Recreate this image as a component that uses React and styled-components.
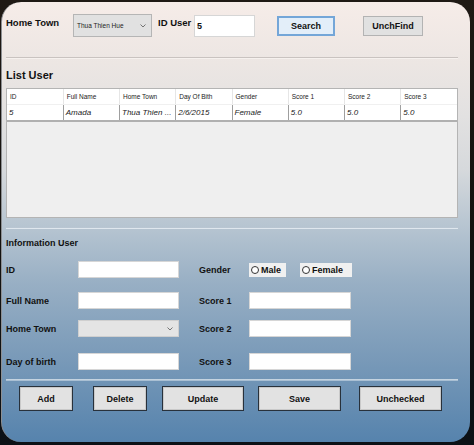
import styled, { createGlobalStyle } from "styled-components";

const GlobalStyle = createGlobalStyle`
  html, body {
    margin: 0;
    padding: 0;
  }
  body {
    width: 474px;
    height: 445px;
    overflow: hidden;
    background: linear-gradient(180deg, #1f1914 0%, #14120f 50%, #0c1116 100%);
    font-family: "Liberation Sans", Arial, sans-serif;
  }
`;

const Window = styled.div`
  box-sizing: border-box;
  width: 469px;
  height: 440px;
  margin: 2px 0 0 1px;
  padding: 12px 12px 0 4px;
  border-radius: 20px;
  border-left: 1px solid #8d8f92;
  background: linear-gradient(
    180deg,
    #f6ece8 0%,
    #ece6e3 14%,
    #e2e1e1 26%,
    #d6d9dc 38%,
    #b4c3d0 52%,
    #98afc4 64%,
    #7b9bb9 80%,
    #5683ad 100%
  );
  overflow: hidden;
`;

const TopBar = styled.div`
  display: flex;
  align-items: center;
  height: 23px;
`;

const BarLabel = styled.span`
  width: ${(p) => p.$w}px;
  margin-left: ${(p) => p.$ml || 0}px;
  font-size: 9.5px;
  font-weight: bold;
  color: #111;
  align-self: flex-start;
  padding-top: 3px;
`;

const Combo = styled.div`
  box-sizing: border-box;
  position: relative;
  width: ${(p) => p.$w}px;
  height: ${(p) => p.$h}px;
  background: ${(p) => (p.$disabled ? "#e4e4e4" : "#e1e1e1")};
  border: 1px solid ${(p) => (p.$disabled ? "#cfcfcf" : "#b5b5b5")};
  font-size: 6.5px;
  color: #222;
  display: flex;
  align-items: center;
  padding-left: 3px;
`;

const Chevron = styled.svg`
  position: absolute;
  right: 5px;
  top: 50%;
  margin-top: -2px;
`;

const TextBox = styled.div`
  box-sizing: border-box;
  width: ${(p) => p.$w}px;
  height: ${(p) => p.$h}px;
  margin-left: ${(p) => p.$ml || 0}px;
  background: #fff;
  border: 1px solid ${(p) => p.$border || "#d6d6d6"};
  font-size: 9px;
  font-weight: bold;
  color: #111;
  display: flex;
  align-items: center;
  padding-left: 2px;
`;

const WinButton = styled.button`
  box-sizing: border-box;
  flex: none;
  width: ${(p) => p.$w}px;
  height: ${(p) => p.$h || 20}px;
  margin-left: ${(p) => p.$ml || 0}px;
  padding: 0;
  background: ${(p) => (p.$focused ? "#e3eef9" : "#e1e1e1")};
  border: ${(p) => (p.$focused ? "2px solid #74a6d8" : "1px solid #b3b3b3")};
  font-family: "Liberation Sans", Arial, sans-serif;
  font-size: 9px;
  font-weight: bold;
  color: #111;
`;

const Divider = styled.div`
  height: 1px;
  margin-top: ${(p) => p.$mt}px;
  background: ${(p) => p.$color};
  border-bottom: 1px solid ${(p) => p.$light};
`;

const SectionTitle = styled.div`
  margin-top: ${(p) => p.$mt}px;
  font-size: ${(p) => p.$size}px;
  line-height: ${(p) => p.$lh}px;
  font-weight: bold;
  color: #111;
`;

const TableBox = styled.div`
  box-sizing: border-box;
  margin-top: 6px;
  height: 130px;
  background: #efefef;
  border: 1px solid #b4b4b4;
`;

const Grid = styled.table`
  width: 100%;
  table-layout: fixed;
  border-collapse: collapse;
  background: #fff;
`;

const HeadCell = styled.th`
  height: 15px;
  padding: 0 0 0 3px;
  text-align: left;
  font-weight: normal;
  font-size: 6.5px;
  color: #222;
  border-left: 1px solid #e6e6e6;
  border-bottom: 1px solid #f0f0f0;
  &:first-child {
    border-left: none;
  }
`;

const DataCell = styled.td`
  height: 15px;
  padding: 0 0 0 2px;
  font-size: 8px;
  font-style: italic;
  color: #222;
  white-space: nowrap;
  border-left: 1px solid #9f9f9f;
  border-bottom: 2px solid #b0b0b0;
  &:first-child {
    border-left: none;
  }
`;

const Form = styled.div`
  margin-top: 12px;
  display: grid;
  grid-template-columns: 72px 101px 70px 102px;
  grid-template-rows: 31px 28px 33px 17px;
  align-items: start;
`;

const FieldLabel = styled.span`
  height: 17px;
  display: flex;
  align-items: center;
  padding-left: ${(p) => p.$indent || 0}px;
  font-size: 9px;
  font-weight: bold;
  color: #111;
`;

const RadioGroup = styled.div`
  display: flex;
  gap: 14px;
  height: 17px;
  align-items: center;
`;

const RadioItem = styled.label`
  box-sizing: border-box;
  flex: none;
  width: ${(p) => p.$w}px;
  height: 14px;
  display: flex;
  align-items: center;
  gap: 2px;
  padding-left: 2px;
  background: #f0f0f0;
  font-size: 9px;
  font-weight: bold;
  color: #111;
`;

const RadioDot = styled.span`
  box-sizing: border-box;
  width: 8px;
  height: 8px;
  border-radius: 50%;
  border: 1px solid #333;
  background: #fff;
`;

const ButtonRow = styled.div`
  display: flex;
  margin-top: 5px;
`;

const ActionButton = styled(WinButton)`
  border: 1px solid #28313b;
  box-shadow: inset 0 0 0 1px #c9c9c9;
  background: #e2e2e2;
`;

const columns = ["ID", "Full Name", "Home Town", "Day Of Bith", "Gender", "Score 1", "Score 2", "Score 3"];
const row = ["5", "Amada", "Thua Thien ...", "2/6/2015", "Female", "5.0", "5.0", "5.0"];

const actions = [
  { label: "Add", w: 54, ml: 13 },
  { label: "Delete", w: 54, ml: 20 },
  { label: "Update", w: 82, ml: 15 },
  { label: "Save", w: 83, ml: 14 },
  { label: "Unchecked", w: 83, ml: 18 },
];

const Arrow = () => (
  <Chevron width="6" height="4" viewBox="0 0 6 4">
    <path d="M0.5 0.5 L3 3 L5.5 0.5" fill="none" stroke="#666" strokeWidth="0.9" />
  </Chevron>
);

export default function App() {
  return (
    <>
      <GlobalStyle />
      <Window>
        <TopBar>
          <BarLabel $w={67}>Home Town</BarLabel>
          <Combo $w={79} $h={23}>
            Thua Thien Hue
            <Arrow />
          </Combo>
          <BarLabel $w={36} $ml={6}>ID User</BarLabel>
          <TextBox $w={61} $h={22}>5</TextBox>
          <WinButton $w={58} $ml={22} $focused>Search</WinButton>
          <WinButton $w={60} $ml={28}>UnchFind</WinButton>
        </TopBar>

        <Divider $mt={20} $color="#c9c3c0" $light="#f6f1ee" />

        <SectionTitle $mt={9} $size={11} $lh={14}>List User</SectionTitle>
        <TableBox>
          <Grid>
            <thead>
              <tr>
                {columns.map((c) => (
                  <HeadCell key={c}>{c}</HeadCell>
                ))}
              </tr>
            </thead>
            <tbody>
              <tr>
                {row.map((v, i) => (
                  <DataCell key={columns[i]}>{v}</DataCell>
                ))}
              </tr>
            </tbody>
          </Grid>
        </TableBox>

        <Divider $mt={9} $color="#b9c6d2" $light="#dfe7ee" />

        <SectionTitle $mt={8} $size={9} $lh={12}>Information User</SectionTitle>
        <Form>
          <FieldLabel>ID</FieldLabel>
          <TextBox $w={101} $h={17} />
          <FieldLabel $indent={20}>Gender</FieldLabel>
          <RadioGroup>
            <RadioItem $w={37}>
              <RadioDot />
              Male
            </RadioItem>
            <RadioItem $w={52}>
              <RadioDot />
              Female
            </RadioItem>
          </RadioGroup>

          <FieldLabel>Full Name</FieldLabel>
          <TextBox $w={101} $h={17} />
          <FieldLabel $indent={20}>Score 1</FieldLabel>
          <TextBox $w={102} $h={17} />

          <FieldLabel>Home Town</FieldLabel>
          <Combo $w={101} $h={17} $disabled>
            <Arrow />
          </Combo>
          <FieldLabel $indent={20}>Score 2</FieldLabel>
          <TextBox $w={102} $h={17} />

          <FieldLabel>Day of birth</FieldLabel>
          <TextBox $w={101} $h={17} />
          <FieldLabel $indent={20}>Score 3</FieldLabel>
          <TextBox $w={102} $h={17} />
        </Form>

        <Divider $mt={9} $color="#c4d3e0" $light="#a9bfd3" />

        <ButtonRow>
          {actions.map((a) => (
            <ActionButton key={a.label} $w={a.w} $ml={a.ml} $h={25}>
              {a.label}
            </ActionButton>
          ))}
        </ButtonRow>
      </Window>
    </>
  );
}
